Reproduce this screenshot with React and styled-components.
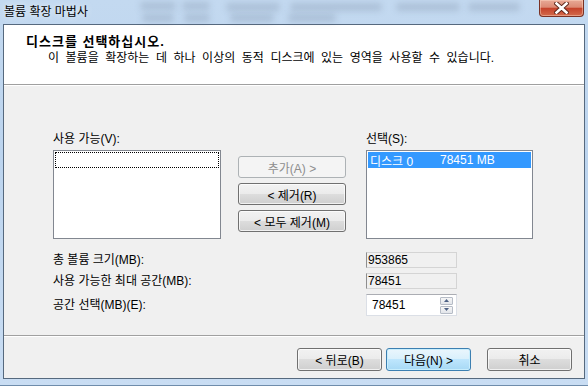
import styled, { createGlobalStyle, css } from "styled-components";

const GlobalStyle = createGlobalStyle`
  html, body {
    margin: 0;
    padding: 0;
    background: #fff;
  }
  body {
    font-family: "Liberation Sans", "Noto Sans CJK KR", sans-serif;
    font-size: 12px;
    color: #000;
  }
`;

// blurred window contents behind the aero glass title bar
const blobs = [
  { x: 140, y: 2, w: 36 },
  { x: 142, y: 14, w: 32 },
  { x: 182, y: 2, w: 28 },
  { x: 184, y: 14, w: 26 },
  { x: 226, y: 3, w: 54 },
  { x: 230, y: 14, w: 44 },
  { x: 290, y: 3, w: 92 },
  { x: 288, y: 14, w: 48 },
  { x: 396, y: 3, w: 64 },
  { x: 468, y: 3, w: 52 },
];

function App() {
  return (
    <>
      <GlobalStyle />
      <Window>
        <TitleBar>
          <Glass>
            {blobs.map((b, i) => (
              <Blob key={i} style={{ left: b.x, top: b.y, width: b.w }} />
            ))}
          </Glass>
          <Title>볼륨 확장 마법사</Title>
          <CloseButton>
            <svg width="15" height="12" viewBox="0 0 15 12">
              <path
                d="M2.5 1.5 L12.5 10.5 M12.5 1.5 L2.5 10.5"
                stroke="#5a2418"
                strokeWidth="4.4"
                strokeLinecap="square"
              />
              <path
                d="M2.5 1.5 L12.5 10.5 M12.5 1.5 L2.5 10.5"
                stroke="#fff"
                strokeWidth="2.6"
                strokeLinecap="square"
              />
            </svg>
          </CloseButton>
        </TitleBar>

        <Client>
          <Header>
            <HeaderTitle>디스크를 선택하십시오.</HeaderTitle>
            <HeaderDesc>
              이 볼륨을 확장하는 데 하나 이상의 동적 디스크에 있는 영역을 사용할 수 있습니다.
            </HeaderDesc>
          </Header>

          <Body>
            <SelectGrid>
              <Label>사용 가능(V):</Label>
              <span />
              <Label>선택(S):</Label>

              <ListBox>
                <ListItem focused />
              </ListBox>
              <MoveButtons>
                <Button disabled>추가(A) &gt;</Button>
                <Button>&lt; 제거(R)</Button>
                <Button>&lt; 모두 제거(M)</Button>
              </MoveButtons>
              <ListBox>
                <ListItem selected>
                  <DiskName>디스크 0</DiskName>
                  <span>78451 MB</span>
                </ListItem>
              </ListBox>
            </SelectGrid>

            <SizeGrid>
              <Label>총 볼륨 크기(MB):</Label>
              <ReadOnlyField>953865</ReadOnlyField>
              <Label>사용 가능한 최대 공간(MB):</Label>
              <ReadOnlyField>78451</ReadOnlyField>
              <Label>공간 선택(MB)(E):</Label>
              <SpinBox>
                <span>78451</span>
                <SpinButtons>
                  <SpinButton>
                    <svg width="5" height="3" viewBox="0 0 5 3">
                      <path d="M0 3 L2.5 0 L5 3 Z" fill="#4d6185" />
                    </svg>
                  </SpinButton>
                  <SpinButton>
                    <svg width="5" height="3" viewBox="0 0 5 3">
                      <path d="M0 0 L2.5 3 L5 0 Z" fill="#4d6185" />
                    </svg>
                  </SpinButton>
                </SpinButtons>
              </SpinBox>
            </SizeGrid>
          </Body>

          <Footer>
            <Button wide>&lt; 뒤로(B)</Button>
            <Button wide primary>
              다음(N) &gt;
            </Button>
            <CancelSlot>
              <Button wide>취소</Button>
            </CancelSlot>
          </Footer>
        </Client>
      </Window>
    </>
  );
}

const Window = styled.div`
  width: 588px;
  height: 386px;
  display: flex;
  flex-direction: column;
  box-sizing: border-box;
  background: linear-gradient(180deg, #c3d9f0 0%, #bcd4ee 40%, #c9ddf3 100%);
  border-bottom: 1px solid #6f8cab;
  overflow: hidden;
`;

const TitleBar = styled.div`
  position: relative;
  height: 24px;
  flex: none;
  display: flex;
  align-items: flex-start;
  justify-content: space-between;
`;

const Glass = styled.div`
  position: absolute;
  inset: 0;
  pointer-events: none;
`;

const Blob = styled.span`
  position: absolute;
  height: 8px;
  background: rgba(80, 95, 120, 0.2);
  filter: blur(3px);
  border-radius: 4px;
`;

const Title = styled.div`
  position: relative;
  padding: 5px 0 0 4px;
  font-size: 12px;
  line-height: 14px;
  text-shadow: 0 0 6px rgba(255, 255, 255, 0.9);
`;

const CloseButton = styled.div`
  position: relative;
  width: 45px;
  height: 17px;
  margin-right: 4px;
  box-sizing: border-box;
  border: 1px solid #7a3124;
  border-top: none;
  border-radius: 0 0 4px 4px;
  background: linear-gradient(
    180deg,
    #e8a996 0%,
    #dc8a74 45%,
    #c5432b 52%,
    #d36a4c 100%
  );
  box-shadow: inset 0 0 0 1px rgba(255, 220, 200, 0.45);
  display: flex;
  align-items: center;
  justify-content: center;
`;

const Client = styled.div`
  flex: 1;
  margin: 0 3px 6px 3px;
  border: 1px solid #56697e;
  background: #f0f0f0;
  display: flex;
  flex-direction: column;
`;

const Header = styled.div`
  height: 60px;
  flex: none;
  box-sizing: border-box;
  padding: 9px 0 0 22px;
  background: #fff;
  border-bottom: 1px solid #a0a0a0;
  box-shadow: 0 1px 0 #fff;
`;

const HeaderTitle = styled.div`
  font-size: 13px;
  font-weight: bold;
  line-height: 15px;
  letter-spacing: 1px;
`;

const HeaderDesc = styled.div`
  margin-top: 2px;
  padding-left: 22px;
  line-height: 14px;
  word-spacing: 3.2px;
`;

const Body = styled.div`
  flex: 1;
  padding: 47px 0 0 49px;
`;

const SelectGrid = styled.div`
  display: grid;
  grid-template-columns: 168px 145px 167px;
  row-gap: 4px;
`;

const Label = styled.div`
  line-height: 14px;
  white-space: nowrap;
`;

const ListBox = styled.div`
  height: 89px;
  box-sizing: border-box;
  padding: 1px;
  background: #fff;
  border: 1px solid #828790;
`;

const ListItem = styled.div`
  height: 16px;
  box-sizing: border-box;
  display: flex;
  align-items: center;
  padding-left: 2px;
  white-space: nowrap;
  ${({ focused }) =>
    focused &&
    css`
      border: 1px dotted #000;
    `}
  ${({ selected }) =>
    selected &&
    css`
      background: #3399ff;
      color: #fff;
    `}
`;

const DiskName = styled.span`
  width: 70px;
`;

const MoveButtons = styled.div`
  display: flex;
  flex-direction: column;
  gap: 5px;
  padding: 6px 0 0 17px;
`;

const Button = styled.button`
  width: ${({ wide }) => (wide ? "85px" : "108px")};
  height: ${({ wide }) => (wide ? "23px" : "22px")};
  padding: 0;
  font: inherit;
  font-size: 12px;
  color: #000;
  border: 1px solid #707070;
  border-radius: 3px;
  background: linear-gradient(
    180deg,
    #f2f2f2 0%,
    #ebebeb 49%,
    #dddddd 50%,
    #cfcfcf 100%
  );
  box-shadow: inset 0 0 0 1px rgba(255, 255, 255, 0.7);
  ${({ disabled }) =>
    disabled &&
    css`
      color: #8d8d8d;
      border-color: #adb2b5;
      background: #f4f4f4;
      box-shadow: none;
    `}
  ${({ primary }) =>
    primary &&
    css`
      border-color: #3c7fb1;
      background: linear-gradient(
        180deg,
        #eaf6fd 0%,
        #d9f0fc 49%,
        #bee6fd 50%,
        #a7d9f5 100%
      );
      box-shadow: inset 0 0 0 1px #c8eefd;
    `}
`;

const SizeGrid = styled.div`
  display: grid;
  grid-template-columns: 313px 91px;
  grid-template-rows: 16px 16px 22px;
  row-gap: 5px;
  align-items: center;
  margin-top: 13px;
`;

const ReadOnlyField = styled.div`
  height: 16px;
  box-sizing: border-box;
  padding-left: 1px;
  line-height: 14px;
  background: #f0f0f0;
  border: 1px solid #d4d4d4;
  border-left-color: #8e8e8e;
`;

const SpinBox = styled.div`
  height: 22px;
  box-sizing: border-box;
  display: flex;
  align-items: center;
  justify-content: space-between;
  padding: 0 3px 0 5px;
  background: #fff;
  border: 1px solid #dbdfe6;
  border-top-color: #abadb3;
`;

const SpinButtons = styled.div`
  display: flex;
  flex-direction: column;
  gap: 1px;
`;

const SpinButton = styled.div`
  width: 13px;
  height: 8px;
  box-sizing: border-box;
  display: flex;
  align-items: center;
  justify-content: center;
  border: 1px solid #b6bcc6;
  border-radius: 1px;
  background: linear-gradient(180deg, #f6f6f6, #e2e5ea);
`;

const Footer = styled.div`
  height: 43px;
  flex: none;
  box-sizing: border-box;
  display: flex;
  justify-content: flex-end;
  gap: 4px;
  padding: 12px 12px 0 0;
  border-top: 1px solid #a0a0a0;
  box-shadow: inset 0 1px 0 #fff;
`;

const CancelSlot = styled.div`
  padding-left: 12px;
`;

export default App;
